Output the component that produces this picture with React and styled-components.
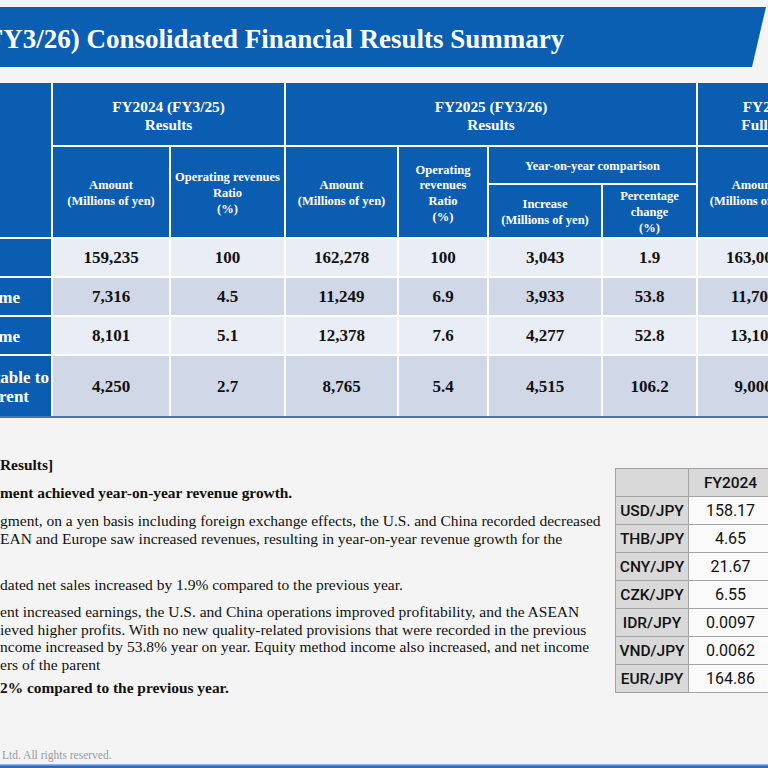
import React from 'react';
import styled, { createGlobalStyle } from 'styled-components';

const GlobalStyle = createGlobalStyle`
	html, body {
		margin: 0;
		padding: 0;
		background: #f4f4f4;
	}
	#root {
		width: 768px;
		height: 768px;
	}
`;

const Slide = styled.div`
	width: 768px;
	height: 768px;
	overflow: hidden;
	display: flex;
	flex-direction: column;
	background: #f4f4f4;
	font-family: "Liberation Serif", "Times New Roman", serif;
	color: #111;
`;

const TitleBar = styled.header`
	flex-shrink: 0;
	margin-top: 7px;
	height: 60px;
	background: #0a5fb3;
	clip-path: polygon(0 0, 766px 0, 752px 100%, 0 100%);
	display: flex;
	align-items: center;
	overflow: hidden;
`;

const Title = styled.h1`
	margin: 0 0 0 -119px;
	padding-top: 4px;
	font-size: 27px;
	font-weight: 700;
	color: #fff;
	white-space: nowrap;
`;

const TableWrap = styled.div`
	flex-shrink: 0;
	align-self: flex-start;
	margin-top: 16px;
	border-bottom: 2px solid #3a78c0;
`;

const Table = styled.table`
	border-collapse: collapse;
	border: 2px hidden;
	table-layout: fixed;
	width: 900px;
`;

const Col = styled.col`
	width: ${p => p.$w}px;
`;

const Row = styled.tr`
	height: ${p => p.$h}px;
`;

const Head = styled.th`
	background: #0a5db0;
	color: #fff;
	border: 2px solid #fff;
	padding: 4px 0 0;
	text-align: center;
	vertical-align: middle;
	font-weight: 700;
	font-size: ${p => (p.$big ? 15.3 : 12.5)}px;
	line-height: ${p => (p.$big ? 18 : 15.7)}px;
`;

const Cell = styled.td`
	background: ${p => (p.$tone === 'dark' ? '#d0d8e8' : '#e9edf5')};
	border: 2px solid #fff;
	padding: 1px 0 0;
	text-align: center;
	vertical-align: middle;
	font-size: 17px;
	font-weight: 700;
	color: #111;
`;

const LabelCell = styled.td`
	background: #0a5db0;
	border: 2px solid #fff;
	padding: 1px 0 0;
	overflow: hidden;
	vertical-align: middle;
	color: #fff;
	font-size: 17px;
	font-weight: 700;
	line-height: 19px;
`;

/* the slide is cropped at the left: each label line ends at $end px */
const LabelLine = styled.div`
	width: 300px;
	margin-left: ${p => p.$end - 300}px;
	text-align: right;
	white-space: nowrap;
`;

const Lower = styled.section`
	flex: 1;
	min-height: 0;
	display: flex;
	align-items: flex-start;
`;

const Notes = styled.div`
	width: 615px;
	flex-shrink: 0;
	padding-top: 38px;
	white-space: nowrap;
	overflow: hidden;
`;

const NoteHead = styled.div`
	font-size: 15.4px;
	font-weight: 700;
	line-height: 18px;
	margin-top: ${p => p.$gap || 0}px;
`;

const NotePara = styled.p`
	margin: ${p => p.$gap || 0}px 0 0;
	font-size: 15.5px;
	line-height: 17.5px;
	color: #111;
`;

const Rates = styled.table`
	flex-shrink: 0;
	margin-top: 50px;
	border-collapse: collapse;
	table-layout: fixed;
	width: 241px;
	font-family: Roboto, "Liberation Sans", sans-serif;
`;

const RateCell = styled.td`
	border: 1.5px solid #a3a3a3;
	height: 27px;
	padding: 0;
	text-align: center;
	vertical-align: middle;
	background: ${p => (p.$head ? '#d9d9d9' : '#fafafa')};
	font-weight: ${p => (p.$head ? 500 : 400)};
	font-size: ${p => (p.$head ? 15.5 : 16)}px;
	color: #111;
`;

const Footer = styled.footer`
	flex-shrink: 0;
	padding: 0 0 2px 2px;
	font-size: 11.5px;
	line-height: 13px;
	color: #9a9a9a;
`;

const BottomRule = styled.div`
	flex-shrink: 0;
	height: 4px;
	background: linear-gradient(#a8c8ea, #2d6db5 60%);
`;

const rows = [
	{ tone: 'light', h: 39, label: [['Net sales', -12]], vals: ['159,235', '100', '162,278', '100', '3,043', '1.9', '163,000', '100'] },
	{ tone: 'dark', h: 39, label: [['Operating income', 20]], vals: ['7,316', '4.5', '11,249', '6.9', '3,933', '53.8', '11,700', '7.2'] },
	{ tone: 'light', h: 39, label: [['Ordinary income', 20]], vals: ['8,101', '5.1', '12,378', '7.6', '4,277', '52.8', '13,100', '8.0'] },
	{ tone: 'dark', h: 61, label: [['Net income attributable to', 49], ['owners of parent', 29]], vals: ['4,250', '2.7', '8,765', '5.4', '4,515', '106.2', '9,000', '5.5'] },
];

const rates = [
	['USD/JPY', '158.17', '146.00'],
	['THB/JPY', '4.65', '4.40'],
	['CNY/JPY', '21.67', '20.30'],
	['CZK/JPY', '6.55', '6.70'],
	['IDR/JPY', '0.0097', '0.0090'],
	['VND/JPY', '0.0062', '0.0057'],
	['EUR/JPY', '164.86', '168.00'],
];

export default function App() {
	return (
		<Slide>
			<GlobalStyle />
			<TitleBar>
				<Title>FY2025 (FY3/26) Consolidated Financial Results Summary</Title>
			</TitleBar>

			<TableWrap>
				<Table>
					<colgroup>
						<Col $w={52} />
						<Col $w={118} />
						<Col $w={115} />
						<Col $w={113} />
						<Col $w={90} />
						<Col $w={114} />
						<Col $w={95} />
						<Col $w={113} />
						<Col $w={90} />
					</colgroup>
					<thead>
						<Row $h={63}>
							<Head rowSpan={3} />
							<Head $big colSpan={2}>FY2024 (FY3/25)<br />Results</Head>
							<Head $big colSpan={4}>FY2025 (FY3/26)<br />Results</Head>
							<Head $big colSpan={2}>FY2025 (FY3/26)<br />Full-year forecast</Head>
						</Row>
						<Row $h={38}>
							<Head rowSpan={2}>Amount<br />(Millions of yen)</Head>
							<Head rowSpan={2}>Operating revenues<br />Ratio<br />(%)</Head>
							<Head rowSpan={2}>Amount<br />(Millions of yen)</Head>
							<Head rowSpan={2}>Operating<br />revenues<br />Ratio<br />(%)</Head>
							<Head colSpan={2}>Year-on-year comparison</Head>
							<Head rowSpan={2}>Amount<br />(Millions of yen)</Head>
							<Head rowSpan={2}>Operating<br />revenues<br />Ratio<br />(%)</Head>
						</Row>
						<Row $h={54}>
							<Head>Increase<br />(Millions of yen)</Head>
							<Head>Percentage<br />change<br />(%)</Head>
						</Row>
					</thead>
					<tbody>
						{rows.map((r, i) => (
							<Row key={i} $h={r.h}>
								<LabelCell>
									{r.label.map(([text, end]) => (
										<LabelLine key={text} $end={end}>{text}</LabelLine>
									))}
								</LabelCell>
								{r.vals.map((v, j) => (
									<Cell key={j} $tone={r.tone}>{v}</Cell>
								))}
							</Row>
						))}
					</tbody>
				</Table>
			</TableWrap>

			<Lower>
				<Notes>
					<NoteHead>Results]</NoteHead>
					<NoteHead $gap={10}>ment achieved year-on-year revenue growth.</NoteHead>
					<NotePara $gap={10}>
						gment, on a yen basis including foreign exchange effects, the U.S. and China recorded decreased<br />
						EAN and Europe saw increased revenues, resulting in year-on-year revenue growth for the<br />
						&nbsp;
					</NotePara>
					<NotePara $gap={11}>dated net sales increased by 1.9% compared to the previous year.</NotePara>
					<NotePara $gap={10}>
						ent increased earnings, the U.S. and China operations improved profitability, and the ASEAN<br />
						ieved higher profits. With no new quality-related provisions that were recorded in the previous<br />
						ncome increased by 53.8% year on year. Equity method income also increased, and net income<br />
						ers of the parent
					</NotePara>
					<NoteHead $gap={6}>2% compared to the previous year.</NoteHead>
				</Notes>

				<Rates>
					<colgroup>
						<Col $w={73} />
						<Col $w={84} />
						<Col $w={84} />
					</colgroup>
					<tbody>
						<tr>
							<RateCell $head />
							<RateCell $head>FY2024</RateCell>
							<RateCell $head>FY2025</RateCell>
						</tr>
						{rates.map(([pair, a, b]) => (
							<tr key={pair}>
								<RateCell $head>{pair}</RateCell>
								<RateCell>{a}</RateCell>
								<RateCell>{b}</RateCell>
							</tr>
						))}
					</tbody>
				</Rates>
			</Lower>

			<Footer>Ltd. All rights reserved.</Footer>
			<BottomRule />
		</Slide>
	);
}
